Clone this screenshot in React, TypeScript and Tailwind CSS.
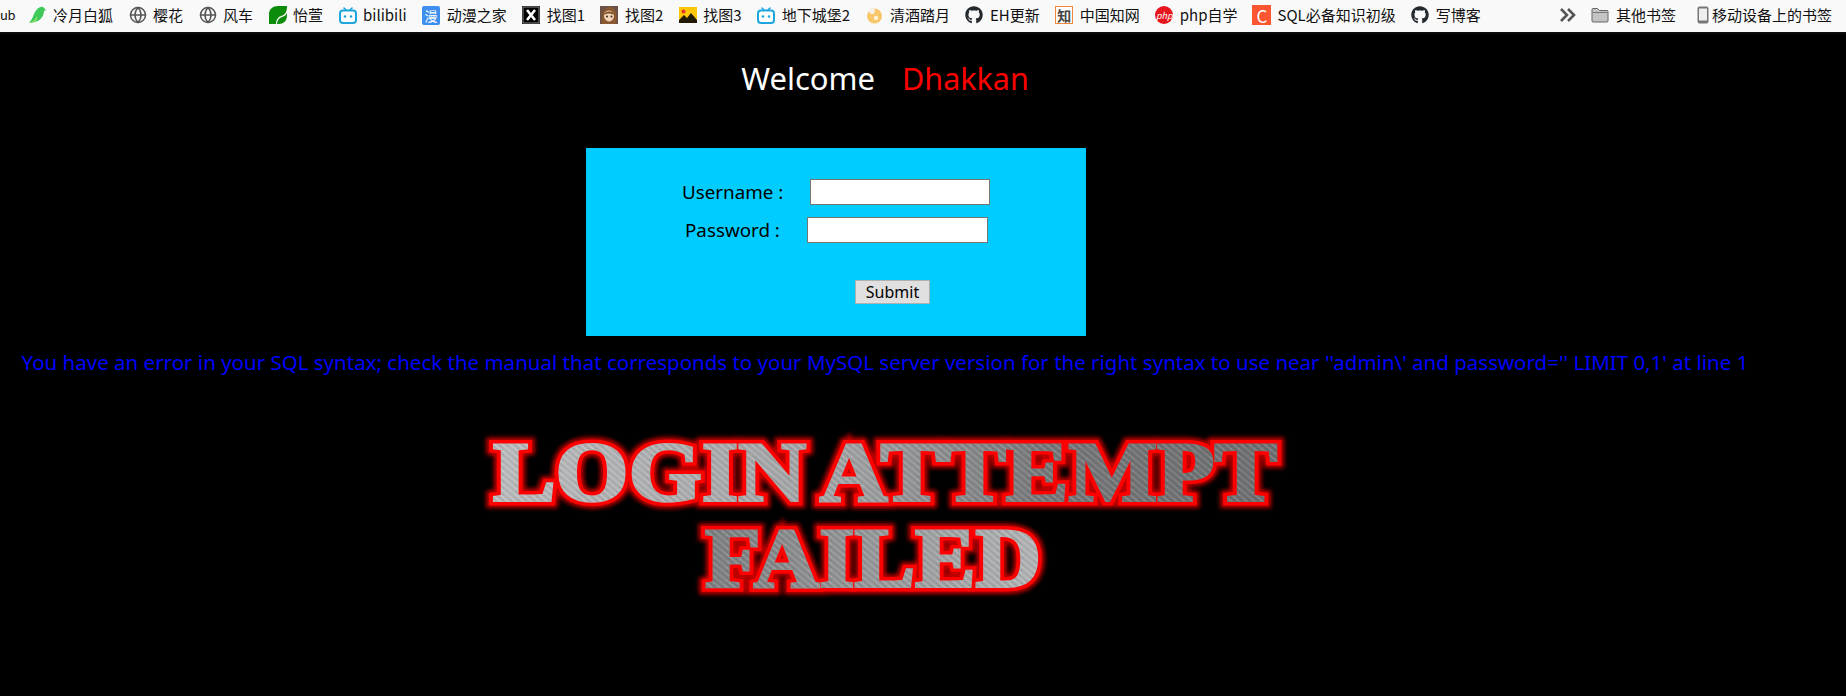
import { Globe } from "lucide-react";
import { FaGithub } from "react-icons/fa";
import type { ReactNode } from "react";

const Bili = () => (
  <svg width="18" height="17" viewBox="0 0 18 17" fill="none">
    <path d="M5 1l3 3M13 1l-3 3" stroke="#1fa6dc" strokeWidth="1.6" strokeLinecap="round" />
    <rect x="1" y="3.6" width="16" height="12.4" rx="3" fill="#fff" stroke="#1fa6dc" strokeWidth="2" />
    <circle cx="6" cy="9.5" r="1.3" fill="#1fa6dc" />
    <circle cx="12" cy="9.5" r="1.3" fill="#1fa6dc" />
  </svg>
);

const Bird = () => (
  <svg width="18" height="18" viewBox="0 0 18 18">
    <path d="M0 17C3 14 4 10 6 6c2-3 5-6 8-5l3 3-2 1c0 7-6 12-15 12z" fill="#3ec95a" />
    <path d="M0 17c3-1 7-3 8-7 1 4-2 7-8 7z" fill="#a4e86d" />
  </svg>
);

const Leaf = () => (
  <svg width="18" height="18" viewBox="0 0 18 18">
    <path d="M0 18V8C0 3 4 0 9 0h9c0 6-2 9-6 10-3 1-5 4-5 8z" fill="#0b8d0b" />
    <path d="M8 18c0-3 2-6 5-7 3-1 4-2 5-4v3c0 5-4 8-8 8z" fill="#0b8d0b" />
  </svg>
);

const Man = () => (
  <span className="flex h-[19px] w-[18px] items-center justify-center rounded-[2px] bg-[#3f8fee] text-[13px] leading-none text-white">漫</span>
);

const XBox = () => (
  <svg width="18" height="18" viewBox="0 0 18 18">
    <rect width="18" height="18" fill="#000" />
    <rect x="1" y="1" width="16" height="16" fill="none" stroke="#888" />
    <path d="M5 4l8 10M13 4L5 14" stroke="#fff" strokeWidth="2.6" />
  </svg>
);

const Anime = () => (
  <svg width="18" height="18" viewBox="0 0 18 18">
    <rect width="18" height="18" fill="#6d5145" />
    <path d="M2 18C1 8 4 1 10 1s7 7 6 17z" fill="#8a5a32" />
    <ellipse cx="9" cy="10" rx="5" ry="5.4" fill="#f1d3b8" />
    <path d="M4 9c1-4 9-5 10 0-3-2-7-2-10 0z" fill="#7a4a22" />
    <circle cx="7" cy="10.5" r="1" fill="#402a1c" />
    <circle cx="11.5" cy="10.5" r="1" fill="#402a1c" />
  </svg>
);

const Pic = () => (
  <svg width="18" height="18" viewBox="0 0 18 18">
    <rect y="1" width="18" height="16" fill="#fdc807" />
    <circle cx="4.5" cy="5.5" r="2" fill="#e5342b" />
    <path d="M0 17v-3l5-5 3 3 4-5 6 7v3z" fill="#231a05" />
  </svg>
);

const Moon = () => (
  <svg width="18" height="18" viewBox="0 0 18 18">
    <circle cx="9.5" cy="10" r="7.5" fill="#f8c667" />
    <circle cx="7" cy="5" r="3" fill="#f4f0e6" />
    <circle cx="11" cy="12" r="2.2" fill="#fdf2d4" />
  </svg>
);

const Zhi = () => (
  <span className="flex h-[18px] w-[18px] items-center justify-center border border-[#ef8a3c] bg-white font-['Noto_Sans_CJK_SC',serif] text-[14px] font-bold leading-none text-[#444]">知</span>
);

const Php = () => (
  <span className="flex h-[18px] w-[18px] items-center justify-center rounded-full bg-[#e8151c] text-[9px] italic leading-none text-white">php</span>
);

const CIcon = () => (
  <span className="flex h-[20px] w-[20px] items-center justify-center bg-[#fc5531] text-[17px] leading-none text-white">C</span>
);

const Gh = () => <FaGithub size={18} color="#24292e" />;
const World = () => <Globe size={18} color="#555" strokeWidth={2} />;

const Folder = () => (
  <svg width="18" height="16" viewBox="0 0 18 16">
    <path d="M1 14V2.5C1 2 1.4 1.500 2 1.500h4.500L8.500 3.500H16c.6 0 1 .4 1 1V14c0 .6-.4 1-1 1H2c-.6 0-1-.4-1-1z" fill="#c4c4c4" stroke="#666" />
    <path d="M1.500 5.500h15" stroke="#777" />
  </svg>
);

const Phone = () => (
  <svg width="12" height="18" viewBox="0 0 12 18">
    <rect x="0.500" y="0.500" width="11" height="17" rx="2" fill="#777" />
    <rect x="2" y="2.500" width="8" height="12" fill="#eee" />
  </svg>
);

const items: [ReactNode, string][] = [
  [<Bird />, "冷月白狐"],
  [<World />, "樱花"],
  [<World />, "风车"],
  [<Leaf />, "怡萱"],
  [<Bili />, "bilibili"],
  [<Man />, "动漫之家"],
  [<XBox />, "找图1"],
  [<Anime />, "找图2"],
  [<Pic />, "找图3"],
  [<Bili />, "地下城堡2"],
  [<Moon />, "清酒踏月"],
  [<Gh />, "EH更新"],
  [<Zhi />, "中国知网"],
  [<Php />, "php自学"],
  [<CIcon />, "SQL必备知识初级"],
  [<Gh />, "写博客"],
];

const Logo = () => {
  const cls = "font-['Liberation_Serif',serif] font-bold text-[84px]";
  return (
    <svg width="830" height="200" viewBox="0 0 830 200" className="block">
      <defs>
        <linearGradient id="metal" gradientUnits="userSpaceOnUse" x1="0" y1="0" x2="830" y2="0">
          <stop offset="0" stopColor="#bdbec0" />
          <stop offset="0.45" stopColor="#a3a4a6" />
          <stop offset="0.7" stopColor="#77787a" />
          <stop offset="1" stopColor="#6f7072" />
        </linearGradient>
        <linearGradient id="metal2" gradientUnits="userSpaceOnUse" x1="220" y1="0" x2="570" y2="0">
          <stop offset="0" stopColor="#7d7e80" />
          <stop offset="0.5" stopColor="#97989a" />
          <stop offset="1" stopColor="#b4b5b7" />
        </linearGradient>
        <pattern id="stripes" width="5" height="5" patternUnits="userSpaceOnUse" patternTransform="rotate(-50)">
          <rect width="1" height="5" fill="#ffffff" opacity="0.12" />
          <rect x="2.500" width="1" height="5" fill="#000000" opacity="0.1" />
        </pattern>
        <filter id="soft" x="-5%" y="-30%" width="110%" height="160%">
          <feGaussianBlur stdDeviation="2" />
        </filter>
        <text id="l1" x="23" y="70" className={cls} textLength="784" lengthAdjust="spacingAndGlyphs" wordSpacing="-4">LOGIN ATTEMPT</text>
        <text id="l2" x="235" y="156" className={cls} textLength="336" lengthAdjust="spacingAndGlyphs">FAILED</text>
      </defs>
      {["l1", "l2"].map((id, i) => {
        const metal = i === 0 ? "url(#metal)" : "url(#metal2)";
        return (
          <g key={id} strokeLinejoin="miter" strokeMiterlimit="3">
            <use href={`#${id}`} fill="#c00000" stroke="#c00000" strokeWidth="15" filter="url(#soft)" />
            <use href={`#${id}`} fill="#ff0000" stroke="#ff0000" strokeWidth="10" />
            <use href={`#${id}`} fill={metal} stroke={metal} strokeWidth="3" />
            <use href={`#${id}`} fill="url(#stripes)" stroke="url(#stripes)" strokeWidth="3" />
          </g>
        );
      })}
    </svg>
  );
};

export default function App() {
  return (
    <div className="flex h-[696px] w-[1846px] flex-col overflow-hidden bg-black font-['Noto_Sans','Noto_Sans_CJK_SC',sans-serif]">
      <div className="flex h-[34px] shrink-0 items-center justify-between border-b-2 border-[#0b0b0b] bg-[#f9f9fa] pb-[2px] pr-[14px] font-['Noto_Sans_CJK_SC','Noto_Sans',sans-serif] text-[15px] text-[#111]">
        <div className="flex items-center gap-[15px]">
          <span className="w-[13px] whitespace-nowrap text-[13px] tracking-tight">ub</span>
          {items.map(([icon, label], i) => (
            <div key={i} className="flex items-center gap-[6px] whitespace-nowrap">
              <span className="flex w-[19px] shrink-0 justify-center">{icon}</span>
              <span>{label}</span>
            </div>
          ))}
        </div>
        <div className="flex items-center">
          <svg width="17" height="14" viewBox="0 0 17 14" fill="none" stroke="#555" strokeWidth="2.600" className="mr-[15px]">
            <path d="M2 1l6 6-6 6M9 1l6 6-6 6" />
          </svg>
          <Folder />
          <span className="ml-[7px] mr-[21px]">其他书签</span>
          <Phone />
          <span className="ml-[3px]">移动设备上的书签</span>
        </div>
      </div>

      <main className="w-[1770px] text-center">
        <div className="mt-[21px] flex h-[46px] items-center justify-center gap-[27px] leading-none">
          <span className="text-[31px] text-white">Welcome</span>
          <span className="text-[30.5px] text-[#ff0000]">Dhakkan</span>
        </div>

        <div className="ml-[586px] mt-[47px] h-[188px] w-[500px] bg-[#00ccff] pt-[31px] text-[18.8px] text-black">
          <div className="flex h-[26px] items-center">
            <span className="ml-[96px] w-[128px] text-left leading-none">Username :</span>
            <input className="h-[26px] w-[180px] border border-[#767676] bg-white" readOnly />
          </div>
          <div className="mt-[12px] flex h-[26px] items-center">
            <span className="ml-[99px] w-[122px] text-left leading-none">Password :</span>
            <input className="h-[26px] w-[181px] border border-[#767676] bg-white" readOnly />
          </div>
          <button className="ml-[269px] mt-[37px] block h-[24px] w-[75px] border border-[#b0b0b0] bg-[#e0e0e0] text-[16px] leading-none text-black">
            Submit
          </button>
        </div>

        <p className="mt-[13px] whitespace-nowrap text-[20.5px] leading-[26px] text-[#0000ff]">
          You have an error in your SQL syntax; check the manual that corresponds to your MySQL server version for the right syntax to use near ''admin\' and password='' LIMIT 0,1' at line 1
        </p>

        <div className="mt-[56px] flex justify-center">
          <Logo />
        </div>
      </main>
    </div>
  );
}
